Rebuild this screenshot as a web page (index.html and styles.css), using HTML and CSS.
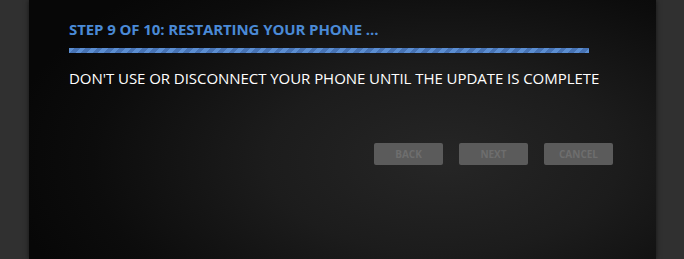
FILE: index.html
```html
<!DOCTYPE html>
<html lang="en">

<head>
  <meta charset="UTF-8">
  <meta name="viewport" content="width=device-width, initial-scale=1.0">
  <title>Update</title>
  <link rel="stylesheet" href="styles.css">
</head>

<body>
  <div class="wizard">
    <div class="step-title">STEP 9 OF 10: RESTARTING YOUR PHONE ...</div>
    <div class="progress"></div>
    <div class="message">DON'T USE OR DISCONNECT YOUR PHONE UNTIL THE UPDATE IS COMPLETE</div>
    <div class="buttons">
      <div class="button back">BACK</div>
      <div class="button next">NEXT</div>
      <div class="button cancel">CANCEL</div>
    </div>
  </div>
</body>
</html>
```

FILE: styles.css
```css
html, body {
  margin: 0;
  height: 259px;
  overflow: hidden;
}
body {
  background-color: #303030;
  font-family: "Open Sans", "Noto Sans", sans-serif;
}
.wizard {
  margin: 0 28px 0 29px;
  height: 259px;
  box-sizing: border-box;
  padding: 19px 43px 0 40px;
  background: radial-gradient(ellipse 70% 90% at 66% 62%, #262626 0%, #1c1c1c 40%, #0c0c0c 80%, #070707 100%);
  box-shadow: 0 0 5px rgba(0, 0, 0, 0.6);
}
.step-title {
  color: #4a8ad6;
  font-weight: bold;
  font-size: 15px;
  line-height: 20px;
  letter-spacing: -0.1px;
}
.progress {
  width: 520px;
  height: 5px;
  margin-top: 9px;
  background: repeating-linear-gradient(135deg, #5b8ed2 0 4px, #4773b4 4px 8px);
}
.message {
  color: #ffffff;
  font-size: 15px;
  line-height: 20px;
  margin-top: 15px;
  letter-spacing: -0.05px;
}
.buttons {
  display: flex;
  justify-content: flex-end;
  gap: 16px;
  margin-top: 55px;
}
.button {
  width: 69px;
  height: 22px;
  display: flex;
  justify-content: center;
  align-items: center;
  background-color: #5b5b5b;
  color: #6e6e6e;
  border-radius: 2px;
  font-size: 10px;
  font-weight: bold;
}
```
